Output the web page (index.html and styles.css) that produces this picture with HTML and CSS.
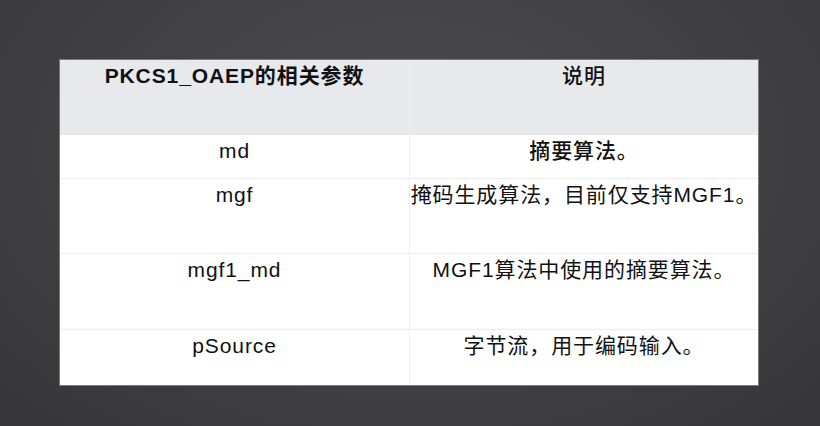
FILE: index.html
```html
<!DOCTYPE html>
<html lang="zh-CN">
<head>
<meta charset="utf-8">
<title>PKCS1_OAEP</title>
<link rel="stylesheet" href="styles.css">
</head>
<body>
<div class="stage">
  <div class="table">
    <div class="cell head strong">PKCS1_OAEP的相关参数</div>
    <div class="cell head divider medium">说明</div>
    <div class="cell">md</div>
    <div class="cell divider medium">摘要算法。</div>
    <div class="cell">mgf</div>
    <div class="cell divider">掩码生成算法，目前仅支持MGF1。</div>
    <div class="cell">mgf1_md</div>
    <div class="cell divider">MGF1算法中使用的摘要算法。</div>
    <div class="cell last">pSource</div>
    <div class="cell divider last">字节流，用于编码输入。</div>
  </div>
</div>
</body>
</html>
```
FILE: styles.css
```css
html, body {
  margin: 0;
  padding: 0;
}
body {
  width: 820px;
  height: 426px;
  overflow: hidden;
  background: radial-gradient(ellipse 70% 90% at 50% 35%, #4c4c50 0%, #414144 55%, #363638 100%);
  font-family: "Liberation Sans", "Noto Sans CJK SC", sans-serif;
  color: #111;
}
.stage {
  padding: 59px 0 0 59px;
}
.table {
  display: grid;
  grid-template-columns: 349px 349px;
  grid-template-rows: 75px 44px 75px 76px 55px;
  width: 698px;
  border: 1px solid #7a7a7c;
  background: #fff;
}
.cell {
  font-size: 21px;
  line-height: 24px;
  padding-top: 4px;
  letter-spacing: 0.9px;
  text-align: center;
  border-bottom: 1px solid #ececee;
  box-sizing: border-box;
  white-space: nowrap;
}
.cell.last {
  border-bottom: none;
}
.divider {
  border-left: 1px solid #eeeef0;
}
.head {
  background: #e8e9ed;
  border-bottom-color: #e6e6e9;
}
.strong {
  font-weight: 700;
}
.medium {
  font-weight: 500;
}
```
